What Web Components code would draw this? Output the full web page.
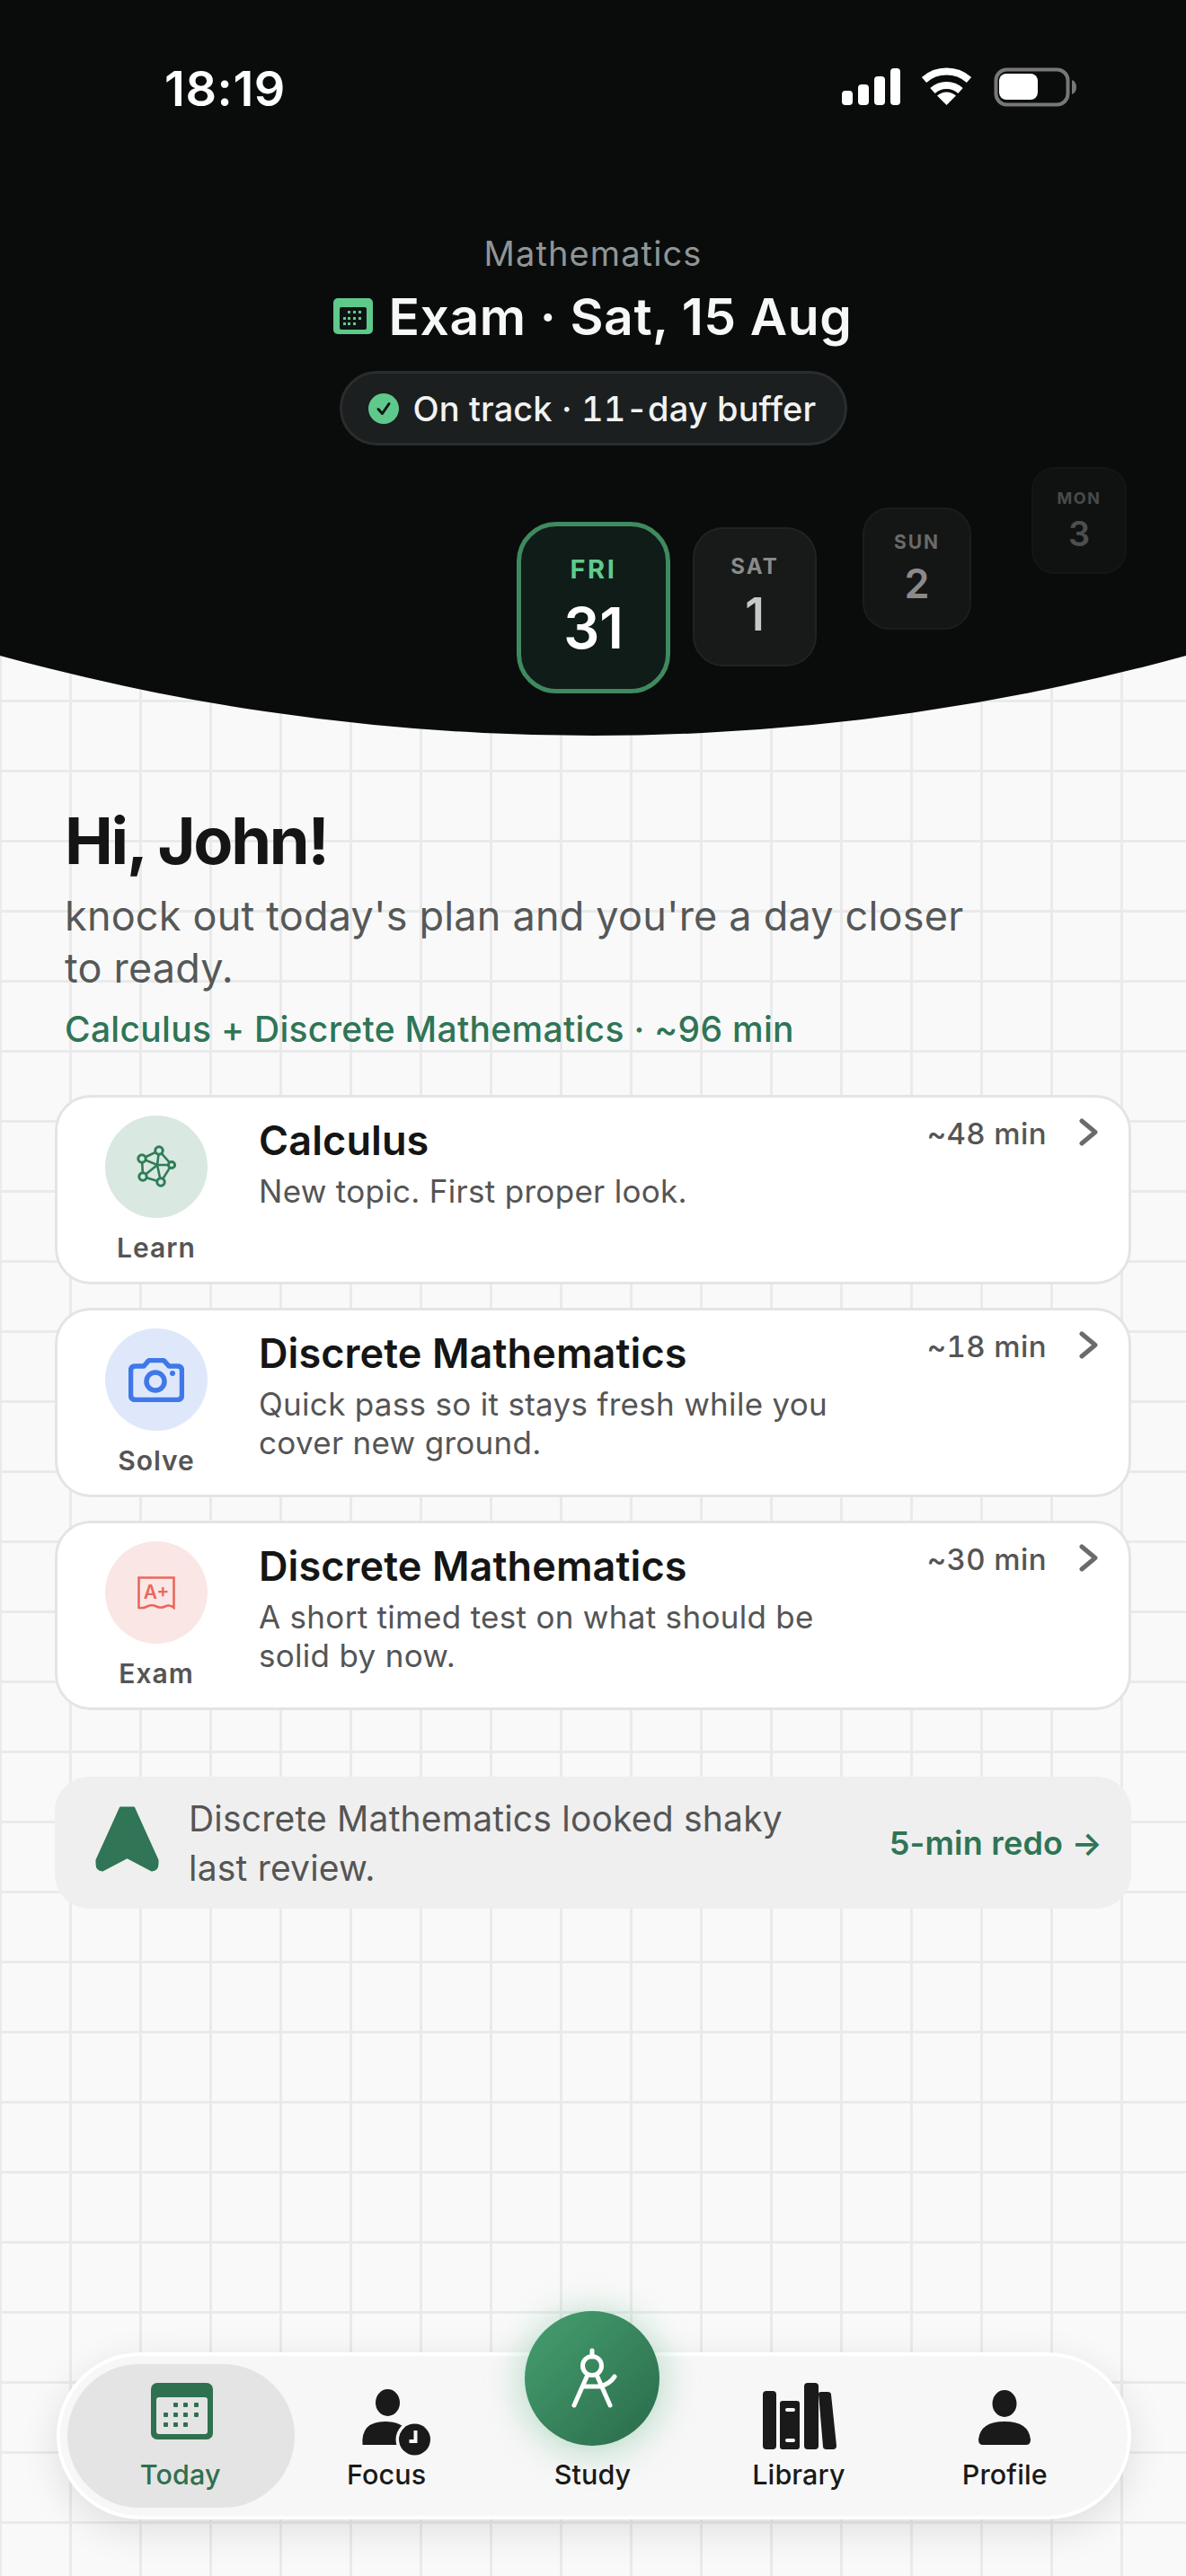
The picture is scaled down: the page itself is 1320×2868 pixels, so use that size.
<!DOCTYPE html>
<html lang="en">
<head>
<meta charset="utf-8">
<title>Today</title>
<style>
  html, body { margin: 0; padding: 0; }
  body {
    width: 1320px;
    height: 2868px;
    overflow: hidden;
    font-family: Inter, "Liberation Sans", sans-serif;
    background-color: #f9f9f9;
    background-image:
      linear-gradient(to right, #eaeaea 3px, transparent 3px),
      linear-gradient(to bottom, #eaeaea 3px, transparent 3px);
    background-size: 78px 78px;
    background-position: -1px -1px;
  }
</style>
</head>
<body>
<today-screen></today-screen>

<script>
// small helper, every component just sets its own shadow html
class Base extends HTMLElement {
    constructor() {
        super();
        this.attachShadow({ mode: 'open' });
    }
    connectedCallback() {
        this.shadowRoot.innerHTML = this.html();
    }
    attr(name) {
        return this.getAttribute(name) || '';
    }
}

class StatusBar extends Base {
    html() {
        return `
        <style>
            :host { display: flex; justify-content: space-between; align-items: flex-start; padding: 69px 122px 0 183px; height: 60px; color: #fff; }
            .time { font-size: 54px; line-height: 60px; font-weight: 600; letter-spacing: 0.6px; }
            svg { display: block; margin-top: 6px; }
        </style>
        <div class="time">18:19</div>
        <svg width="261" height="44" viewBox="0 0 261 44">
            <g fill="#fff">
                <rect x="0" y="26" width="12" height="16" rx="4"/>
                <rect x="18" y="19" width="12" height="23" rx="4"/>
                <rect x="36" y="10" width="12" height="32" rx="4"/>
                <rect x="54" y="1" width="11" height="41" rx="4"/>
                <path d="M116.5 42 L106 31.5 Q116.5 23.5 127 31.5 Z"/>
            </g>
            <g fill="none" stroke="#fff" stroke-width="8">
                <path d="M91.5 14 A38 38 0 0 1 141.5 14"/>
                <path d="M101 26 A23 23 0 0 1 132 26"/>
            </g>
            <rect x="171.5" y="2.5" width="80" height="39" rx="12" fill="none" stroke="#777" stroke-width="4"/>
            <rect x="175" y="7" width="43" height="29" rx="8" fill="#fff"/>
            <path d="M256 14 Q261 16 261 22 Q261 28 256 30 Z" fill="#777"/>
        </svg>`;
    }
}

class CountdownHead extends Base {
    html() {
        return `
        <style>
            :host { display: flex; flex-direction: column; align-items: center; }
            .subject { margin-top: 131px; font-size: 38px; line-height: 44px; color: #8f9696; letter-spacing: 1.1px; }
            .title { margin-top: 16px; display: flex; align-items: center; gap: 17px; font-size: 57px; line-height: 66px; font-weight: 600; color: #f7f7f7; letter-spacing: 0.6px; }
            .title svg { display: block; margin-top: -2px; }
            .pill { margin-top: 27px; box-sizing: border-box; height: 83px; width: 565px; display: flex; align-items: center; gap: 16px; padding-left: 29px;
                    background: #1c1f1f; border: 3px solid #2a2d2d; border-radius: 42px; font-size: 38px; font-weight: 500; color: #f2f2f2; letter-spacing: 0.1px; font-variant-numeric: tabular-nums; }
        </style>
        <div class="subject">Mathematics</div>
        <div class="title">
            <svg width="44" height="40" viewBox="0 0 44 40">
                <rect width="44" height="40" rx="5" fill="#5fc98c"/>
                <rect x="7" y="10" width="30" height="25" rx="2" fill="#0d1512"/>
                <g fill="#5fc98c">
                    <rect x="16" y="14" width="3" height="3"/><rect x="22" y="14" width="3" height="3"/><rect x="28" y="14" width="3" height="3"/>
                    <rect x="11" y="21" width="3" height="3"/><rect x="16" y="21" width="3" height="3"/><rect x="22" y="21" width="3" height="3"/><rect x="28" y="21" width="3" height="3"/>
                    <rect x="11" y="27" width="3" height="3"/><rect x="16" y="27" width="3" height="3"/><rect x="22" y="27" width="3" height="3"/>
                </g>
            </svg>
            <span>Exam · Sat, 15 Aug</span>
        </div>
        <div class="pill">
            <svg width="34" height="34" viewBox="0 0 34 34">
                <circle cx="17" cy="17" r="17" fill="#5fc98c"/>
                <path d="M11 17.5 L15.5 22.5 L23 11.5" fill="none" stroke="#0d1512" stroke-width="3" stroke-linecap="round" stroke-linejoin="round"/>
            </svg>
            <span>On track · 11-day buffer</span>
        </div>`;
    }
}

class DateChip extends Base {
    html() {
        return `
        <style>
            :host { display: block; flex: none; box-sizing: border-box; width: var(--w); height: var(--h); border-radius: var(--r);
                    background: var(--bg); border: var(--bw, 2px) solid var(--line); }
            .in { height: 100%; display: flex; flex-direction: column; align-items: center; justify-content: center; padding-top: 2px; box-sizing: border-box; }
            .day { font-size: var(--fd); line-height: 1.2; font-weight: 700; letter-spacing: 0.09em; color: var(--cd); }
            .num { font-size: var(--fn); line-height: 1.2; font-weight: 600; color: var(--cn); margin-top: var(--gap); }
        </style>
        <div class="in">
            <div class="day">${this.attr('day')}</div>
            <div class="num">${this.attr('num')}</div>
        </div>`;
    }
}

class DateStrip extends Base {
    html() {
        return `
        <style>
            :host { display: flex; align-items: flex-start; margin-top: 24px; padding-left: 575px; height: 252px; }
        </style>
        <slot></slot>`;
    }
}

class TopHeader extends Base {
    html() {
        return `
        <style>
            :host { display: block; height: 820px; background: #0a0c0c; clip-path: circle(2491px at 660px -1672px); }
        </style>
        <slot></slot>`;
    }
}

class GreetingBlock extends Base {
    html() {
        return `
        <style>
            :host { display: block; padding: 73px 72px 0; }
            h1 { margin: 0; font-size: 72px; line-height: 86px; font-weight: 700; color: #151515; letter-spacing: -2.2px; }
            p { margin: 12px 0 0; width: 1040px; font-size: 45px; line-height: 58px; color: #555858; letter-spacing: 0.2px; }
            .plan { margin-top: 14px; font-size: 39px; line-height: 50px; font-weight: 500; color: #2f7556; letter-spacing: 0.3px; }
        </style>
        <h1>Hi, John!</h1>
        <p>knock out today's plan and you're a day closer to ready.</p>
        <div class="plan">Calculus + Discrete Mathematics · ~96 min</div>`;
    }
}

class PlanCard extends Base {
    html() {
        return `
        <style>
            :host { display: flex; box-sizing: border-box; height: 211px; padding: 20px 33px 0 53px; background: #fff; border: 3px solid #e4e4e4; border-radius: 40px; }
            .kind { flex: none; width: 114px; display: flex; flex-direction: column; align-items: center; }
            .disc { width: 114px; height: 114px; border-radius: 50%; background: var(--tint); display: flex; align-items: center; justify-content: center; }
            .kind-label { margin-top: 15px; font-size: 30px; line-height: 36px; font-weight: 600; color: #555; letter-spacing: 1px; white-space: nowrap; }
            .body { flex: 1; margin-left: 57px; }
            .title { font-size: 45px; line-height: 54px; font-weight: 600; color: #151515; margin-top: 1px; letter-spacing: 0.1px; }
            .sub { margin-top: 8px; width: 660px; font-size: 35px; line-height: 43px; color: #555; letter-spacing: 0.3px; }
            .time { flex: none; margin-left: auto; font-size: 33px; line-height: 40px; font-weight: 500; color: #555; letter-spacing: 0.4px; white-space: nowrap; font-variant-numeric: tabular-nums; }
            .chev { flex: none; margin: 3px 0 0 36px; display: block; }
        </style>
        <div class="kind">
            <div class="disc"><slot></slot></div>
            <div class="kind-label">${this.attr('kind')}</div>
        </div>
        <div class="body">
            <div class="title">${this.attr('title')}</div>
            <div class="sub">${this.attr('sub')}</div>
        </div>
        <div class="time">${this.attr('time')}</div>
        <svg class="chev" width="22" height="31" viewBox="0 0 22 31"><path d="M3 3 L18 15.5 L3 28" fill="none" stroke="#6b6b6b" stroke-width="5" stroke-linecap="round" stroke-linejoin="round"/></svg>`;
    }
}

class PlanList extends Base {
    html() {
        return `
        <style>
            :host { display: flex; flex-direction: column; gap: 26px; margin: 48px 61px 0; }
        </style>
        <slot></slot>`;
    }
}

class NudgeBar extends Base {
    html() {
        return `
        <style>
            :host { display: flex; align-items: center; box-sizing: border-box; height: 147px; margin: 74px 61px 0; padding: 0 32px 0 45px; background: #efefef; border-radius: 38px; }
            svg { flex: none; display: block; margin-top: -8px; }
            .text { margin-left: 33px; width: 700px; font-size: 39px; line-height: 55px; color: #555; letter-spacing: 0.2px; }
            .link { margin-left: auto; font-size: 36px; font-weight: 600; color: #2f7556; white-space: nowrap; letter-spacing: 0.2px; }
        </style>
        <svg width="71" height="73" viewBox="0 0 71 73">
            <path d="M28 1.5 H43 L69.5 60 V64 Q69.5 71 63 71.5 L35.5 57 L8 71.5 Q1.5 71 1.5 64 V60 Z" fill="#2f7556" stroke="#2f7556" stroke-width="2" stroke-linejoin="round"/>
        </svg>
        <div class="text">Discrete Mathematics looked shaky last review.</div>
        <div class="link">5-min redo →</div>`;
    }
}

class TabItem extends Base {
    html() {
        return `
        <style>
            :host { display: flex; flex-direction: column; align-items: center; position: relative; color: #1a1a1a; }
            :host([active]) { color: #2f7050; }
            :host([active])::before { content: ''; position: absolute; left: -11px; right: -13px; top: 9px; bottom: 9px; border-radius: 80px; background: #e4e4e4; }
            .icon { position: relative; height: 74px; margin-top: 30px; display: flex; justify-content: center; align-items: flex-start; }
            .label { position: relative; margin-top: 9px; font-size: 30.5px; line-height: 37px; font-weight: 500; letter-spacing: 0.1px; }
        </style>
        <div class="icon"><slot></slot></div>
        <div class="label">${this.attr('label')}</div>`;
    }
}

class TabBar extends Base {
    html() {
        return `
        <style>
            :host { position: absolute; left: 63px; top: 2619px; box-sizing: border-box; width: 1196px; height: 186px; padding: 0 22px 0 19px;
                    display: grid; grid-template-columns: repeat(5, 1fr); background: #f7f7f7; border: 4px solid #fff; border-radius: 93px;
                    box-shadow: 0 12px 44px rgba(0,0,0,.11); }
        </style>
        <slot></slot>`;
    }
}

class TodayScreen extends Base {
    html() {
        return `
        <style>
            :host { display: block; }
            .study { width: 150px; height: 150px; margin-top: -80px; flex: none; border-radius: 50%; display: block;
                     background: linear-gradient(135deg, #46a070, #2a6a4b); box-shadow: 0 4px 44px rgba(70,170,115,.42); }
            svg { display: block; }
        </style>
        <top-header>
            <status-bar></status-bar>
            <countdown-head></countdown-head>
            <date-strip>
                <date-chip day="FRI" num="31" style="--w:171px;--h:191px;--r:44px;--bg:#101c17;--line:#3f8a5f;--bw:5px;--fd:29px;--fn:63px;--cd:#62c98c;--cn:#fff;--gap:10px;margin-top:61px"></date-chip>
                <date-chip day="SAT" num="1" style="--w:138px;--h:155px;--r:34px;--bg:#181a1a;--line:#202323;--fd:24px;--fn:51px;--cd:#8b8b8b;--cn:#c8c8c8;--gap:8px;margin:67px 0 0 25px"></date-chip>
                <date-chip day="SUN" num="2" style="--w:121px;--h:136px;--r:30px;--bg:#141616;--line:#1b1d1d;--fd:21px;--fn:45px;--cd:#6a6a6a;--cn:#8a8a8a;--gap:7px;margin:45px 0 0 51px"></date-chip>
                <date-chip day="MON" num="3" style="--w:106px;--h:119px;--r:26px;--bg:#101212;--line:#141616;--fd:18px;--fn:38px;--cd:#4a4a4a;--cn:#4e4e4e;--gap:6px;margin:0 0 0 67px"></date-chip>
            </date-strip>
        </top-header>

        <greeting-block></greeting-block>

        <plan-list>
            <plan-card kind="Learn" title="Calculus" sub="New topic. First proper look." time="~48 min" style="--tint:#d9e8e1">
                <svg width="50" height="50" viewBox="0 0 50 50" fill="none" stroke="#2f7d58" stroke-width="2.6">
                    <path d="M28 7 L9 16 L10 36 L30 42 L42 23 Z M28 7 L26 23 L30 42 M9 16 L26 23 L42 23 M10 36 L26 23"/>
                    <g fill="#d9e8e1" stroke-width="3">
                        <circle cx="28" cy="7" r="4.2"/><circle cx="9" cy="16" r="4.2"/><circle cx="42" cy="23" r="3.6"/><circle cx="10" cy="36" r="4.2"/><circle cx="30" cy="42" r="4.2"/>
                    </g>
                </svg>
            </plan-card>
            <plan-card kind="Solve" title="Discrete Mathematics" sub="Quick pass so it stays fresh while you cover new ground." time="~18 min" style="--tint:#dfe8fb">
                <svg width="62" height="49" viewBox="0 0 62 49">
                    <path d="M8 9 H17 L21 4.5 Q22 2.5 24 2.5 H38 Q40 2.5 41 4.5 L45 9 H54 Q59.5 9 59.5 14 V41 Q59.5 46.5 54 46.5 H8 Q2.5 46.5 2.5 41 V14 Q2.5 9 8 9 Z" fill="none" stroke="#3f78e8" stroke-width="5.5" stroke-linejoin="round"/>
                    <circle cx="30" cy="26" r="10" fill="none" stroke="#3f78e8" stroke-width="5.5"/>
                    <circle cx="49" cy="17" r="3" fill="#3f78e8"/>
                </svg>
            </plan-card>
            <plan-card kind="Exam" title="Discrete Mathematics" sub="A short timed test on what should be solid by now." time="~30 min" style="--tint:#fae7e5">
                <svg width="42" height="37" viewBox="0 0 42 37">
                    <path d="M1.5 35 V1.5 H40.5 V35 Q36 31 31 33.5 Q26 36 21 33.5 Q16 31 11 33.5 Q6 36 1.5 35 Z" fill="none" stroke="#e8695c" stroke-width="2.6"/>
                    <text x="21" y="25" text-anchor="middle" font-family="Inter, sans-serif" font-size="21" font-weight="600" fill="#e8695c">A+</text>
                </svg>
            </plan-card>
        </plan-list>

        <nudge-bar></nudge-bar>

        <tab-bar>
            <tab-item label="Today" active>
                <svg width="69" height="63" viewBox="0 0 69 63" style="margin-left:3px">
                    <rect width="69" height="63" rx="7" fill="#2f7050"/>
                    <rect x="6" y="16" width="57" height="41" rx="3" fill="#e4e4e4"/>
                    <g fill="#2f7050">
                        <rect x="25" y="22" width="5" height="5" rx="1"/><rect x="36" y="22" width="5" height="5" rx="1"/><rect x="48" y="22" width="5" height="5" rx="1"/>
                        <rect x="14" y="33" width="5" height="5" rx="1"/><rect x="25" y="33" width="5" height="5" rx="1"/><rect x="36" y="33" width="5" height="5" rx="1"/><rect x="48" y="33" width="5" height="5" rx="1"/>
                        <rect x="14" y="44" width="5" height="5" rx="1"/><rect x="25" y="44" width="5" height="5" rx="1"/><rect x="36" y="44" width="5" height="5" rx="1"/>
                    </g>
                </svg>
            </tab-item>
            <tab-item label="Focus">
                <svg width="100" height="82" viewBox="-1.5 0 100 82">
                    <ellipse cx="50" cy="22" rx="13.5" ry="15" fill="#1a1a1a"/>
                    <path d="M22 69 Q20 43 47 43 Q65 43 72 54 V69 Z" fill="#1a1a1a"/>
                    <circle cx="80" cy="63" r="21" fill="#f7f7f7"/>
                    <circle cx="80" cy="63" r="17.5" fill="#1a1a1a"/>
                    <path d="M81 53 V65 H74" fill="none" stroke="#f7f7f7" stroke-width="4"/>
                </svg>
            </tab-item>
            <tab-item label="Study">
                <div class="study">
                    <svg width="150" height="150" viewBox="585 2573 150 150" fill="none" stroke="#fff" stroke-width="5" stroke-linecap="round">
                        <path d="M660 2617 V2624"/>
                        <circle cx="660" cy="2634" r="10.5"/>
                        <path d="M655 2644 L640 2678 M665 2644 L680 2678 M652 2657 H668 Q679 2655 685 2646"/>
                    </svg>
                </div>
            </tab-item>
            <tab-item label="Library">
                <svg width="82" height="74" viewBox="0 0 82 74" style="margin-left:2px">
                    <g fill="#1a1a1a">
                        <rect x="0" y="9" width="15" height="65" rx="4"/>
                        <rect x="19" y="20" width="22" height="54" rx="3"/>
                        <rect x="46" y="0" width="16" height="74" rx="4"/>
                        <path d="M62 12 Q62 10 65 10 L72 10 Q76 10 76 13 L82 70 Q82 74 78 74 L71 74 Q67 74 67 71 Z"/>
                    </g>
                    <rect x="25" y="28" width="11" height="4" rx="2" fill="#f7f7f7"/>
                    <rect x="25" y="62" width="11" height="4" rx="2" fill="#f7f7f7"/>
                </svg>
            </tab-item>
            <tab-item label="Profile">
                <svg width="60" height="70" viewBox="0 0 60 70">
                    <ellipse cx="30" cy="23" rx="13.5" ry="15" fill="#1a1a1a"/>
                    <path d="M1 63 Q3 43 30 43 Q57 43 59 63 Q59 69 54 69 H6 Q1 69 1 63 Z" fill="#1a1a1a"/>
                </svg>
            </tab-item>
        </tab-bar>`;
    }
}

customElements.define('status-bar', StatusBar);
customElements.define('countdown-head', CountdownHead);
customElements.define('date-chip', DateChip);
customElements.define('date-strip', DateStrip);
customElements.define('top-header', TopHeader);
customElements.define('greeting-block', GreetingBlock);
customElements.define('plan-card', PlanCard);
customElements.define('plan-list', PlanList);
customElements.define('nudge-bar', NudgeBar);
customElements.define('tab-item', TabItem);
customElements.define('tab-bar', TabBar);
customElements.define('today-screen', TodayScreen);
</script>
</body>
</html>
